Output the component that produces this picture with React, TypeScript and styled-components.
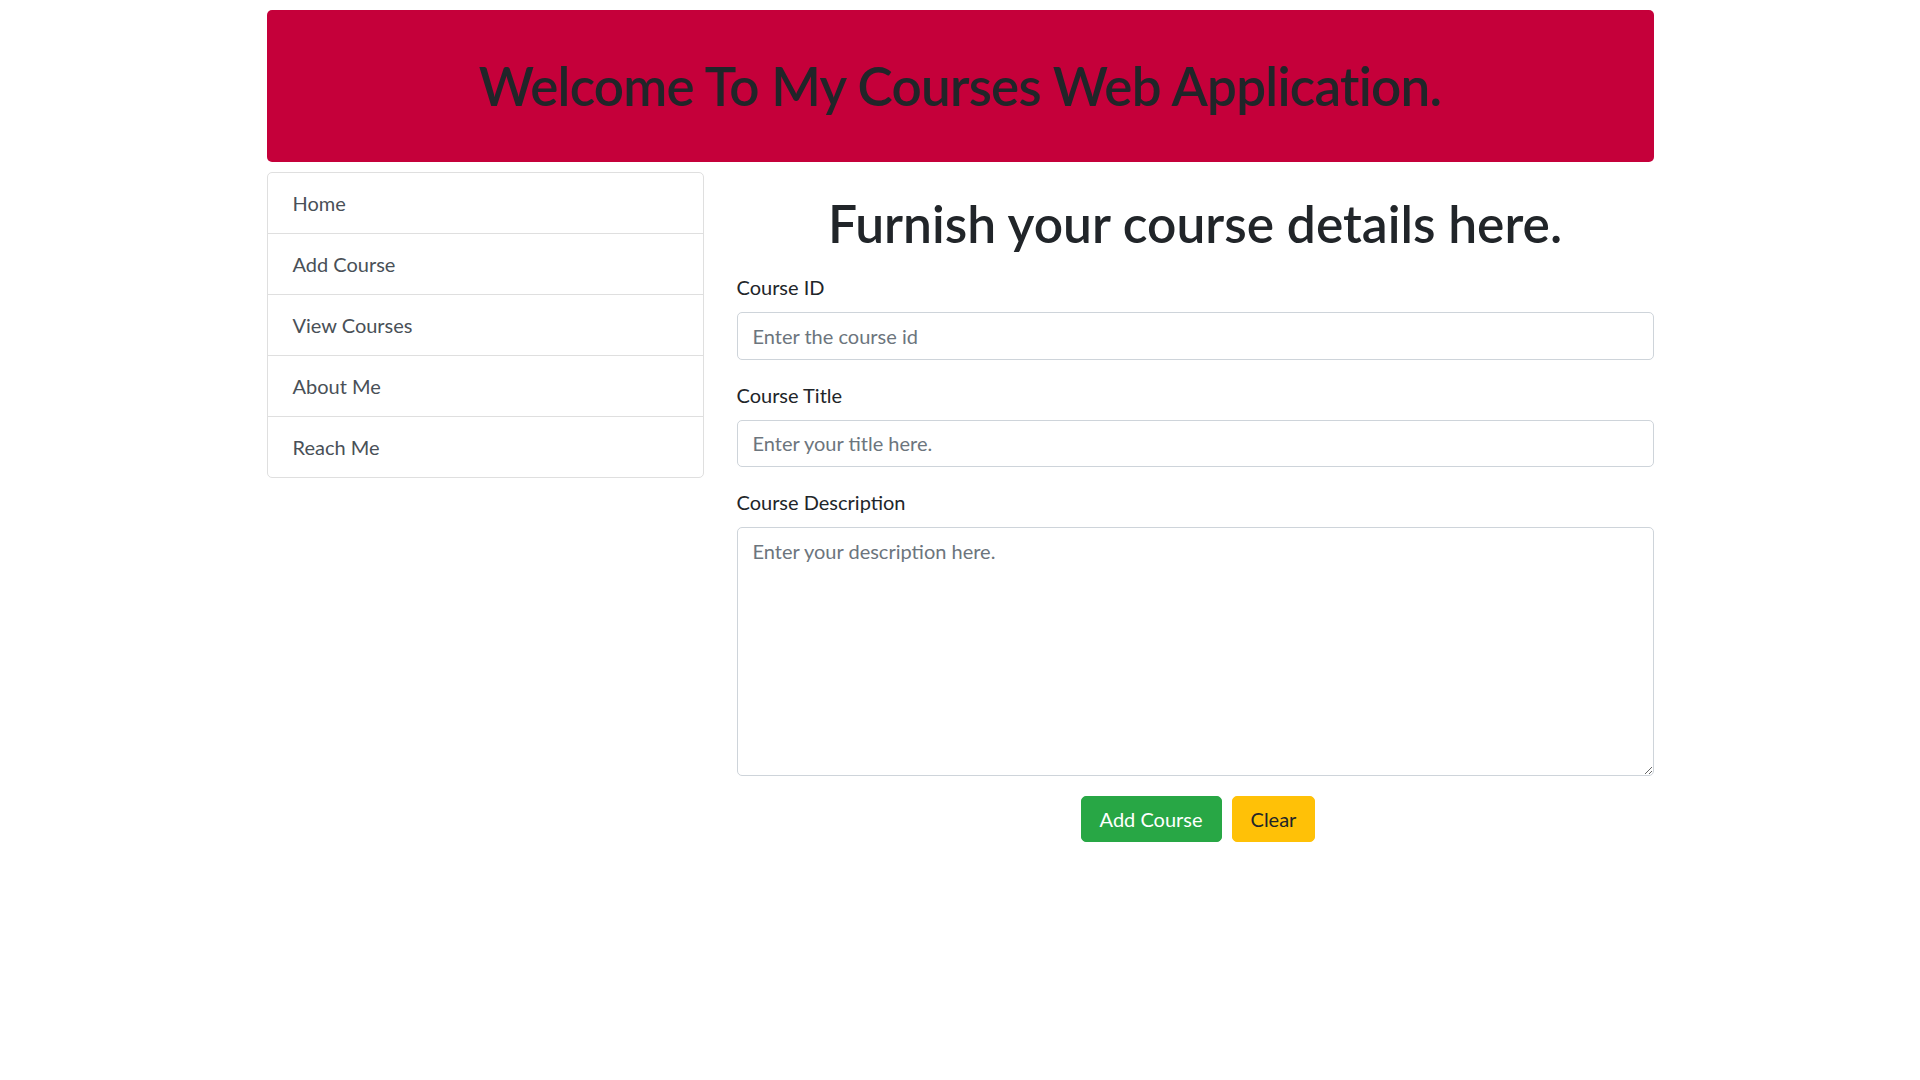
import React from "react";
import styled, { createGlobalStyle } from "styled-components";

const FONT = `Lato, "Open Sans", "Liberation Sans", sans-serif`;

const GlobalStyle = createGlobalStyle`
  html, body {
    margin: 0;
    padding: 0;
    background: #ffffff;
    font-family: ${FONT};
    color: #212529;
  }
  * { box-sizing: border-box; }
`;

const Page = styled.div`
  padding-top: 10px;
`;

const Container = styled.div`
  width: 1387px;
  margin: 0 auto;
`;

const Banner = styled.header`
  height: 152px;
  background: #c5003a;
  border-radius: 5px;
  display: flex;
  align-items: center;
  justify-content: center;
`;

const BannerTitle = styled.h1`
  margin: 0;
  font-size: 53px;
  font-weight: 600;
  letter-spacing: -0.75px;
  line-height: 1.2;
  color: #212529;
`;

const Row = styled.div`
  display: flex;
  gap: 33px;
  margin-top: 10px;
  align-items: flex-start;
`;

const NavList = styled.nav`
  width: 437px;
  flex: none;
  border: 1px solid #dfdfdf;
  border-radius: 5px;
  display: flex;
  flex-direction: column;
`;

const NavItem = styled.a`
  height: 61px;
  padding: 0 25px;
  display: flex;
  align-items: center;
  font-size: 20px;
  color: #495057;
  text-decoration: none;
  border-bottom: 1px solid #dfdfdf;
  &:last-child { border-bottom: none; height: 60px; }
`;

const Main = styled.main`
  flex: 1;
  min-width: 0;
`;

const Heading = styled.h2`
  margin: 21px 0 19px;
  text-align: center;
  font-size: 51.5px;
  font-weight: 600;
  line-height: 60px;
  color: #212529;
`;

const Group = styled.div`
  margin-bottom: 20px;
`;

const Label = styled.label`
  display: block;
  font-size: 20px;
  line-height: 30px;
  margin-bottom: 10px;
  color: #212529;
`;

const fieldBase = `
  display: block;
  width: 100%;
  border: 1px solid #ced4da;
  border-radius: 5px;
  font-family: ${FONT};
  font-size: 20px;
  line-height: 30px;
  color: #495057;
  background: #fff;
  padding: 0 15px;
  outline: none;
  &::placeholder { color: #6c757d; opacity: 1; }
`;

const Input = styled.input`
  ${fieldBase}
  height: 47.5px;
`;

const TextArea = styled.textarea`
  ${fieldBase}
  height: 249px;
  padding: 8px 15px;
  resize: vertical;
`;

const Actions = styled.div`
  display: flex;
  justify-content: center;
  gap: 10px;
  padding-left: 6px;
`;

const Button = styled.button<{ $variant: "success" | "warning" }>`
  height: 46px;
  padding: 0 18px;
  border: 1px solid ${(p) => (p.$variant === "success" ? "#28a745" : "#ffc107")};
  background: ${(p) => (p.$variant === "success" ? "#28a745" : "#ffc107")};
  color: ${(p) => (p.$variant === "success" ? "#ffffff" : "#212529")};
  border-radius: 5px;
  font-family: ${FONT};
  font-size: 20px;
  line-height: 30px;
  cursor: pointer;
`;

export default function App() {
  const links = ["Home", "Add Course", "View Courses", "About Me", "Reach Me"];
  return (
    <Page>
      <GlobalStyle />
      <Container>
        <Banner>
          <BannerTitle>Welcome To My Courses Web Application.</BannerTitle>
        </Banner>
        <Row>
          <NavList>
            {links.map((l) => (
              <NavItem key={l} href="#">
                {l}
              </NavItem>
            ))}
          </NavList>
          <Main>
            <Heading>Furnish your course details here.</Heading>
            <form onSubmit={(e) => e.preventDefault()}>
              <Group>
                <Label htmlFor="courseId">Course ID</Label>
                <Input id="courseId" type="text" placeholder="Enter the course id" />
              </Group>
              <Group>
                <Label htmlFor="courseTitle">Course Title</Label>
                <Input id="courseTitle" type="text" placeholder="Enter your title here." />
              </Group>
              <Group>
                <Label htmlFor="courseDesc">Course Description</Label>
                <TextArea id="courseDesc" placeholder="Enter your description here." />
              </Group>
              <Actions>
                <Button type="submit" $variant="success">Add Course</Button>
                <Button type="reset" $variant="warning">Clear</Button>
              </Actions>
            </form>
          </Main>
        </Row>
      </Container>
    </Page>
  );
}
